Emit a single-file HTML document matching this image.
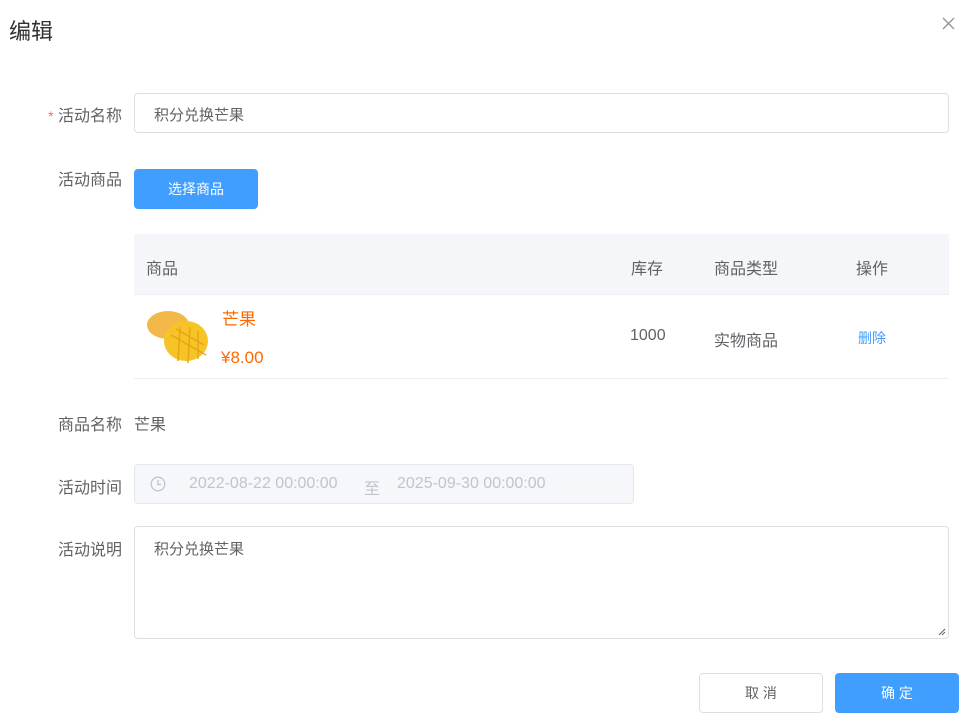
<!DOCTYPE html>
<html><head><meta charset="utf-8"><style>
*{box-sizing:border-box;margin:0;padding:0}
body{width:964px;height:726px;background:#fff;font-family:"Liberation Sans","Noto Sans CJK SC",sans-serif;color:#606266;position:relative;overflow:hidden}
.a{position:absolute}
.lbl{position:absolute;right:842px;font-size:16px;color:#606266;white-space:nowrap}
.inp{position:absolute;border:1px solid #dcdfe6;border-radius:4px;background:#fff}
</style></head><body>
<div class="a" style="left:9px;top:14px;font-size:22px;color:#303133">编辑</div>
<svg class="a" style="left:942px;top:17px" width="13" height="13" viewBox="0 0 13 13"><path d="M1 1L12 12M12 1L1 12" stroke="#909399" stroke-width="1.3"/></svg>

<div class="lbl" style="top:102px"><span style="color:#f56c6c;font-size:14px">*</span> 活动名称</div>
<div class="inp" style="left:134px;top:93px;width:815px;height:40px"><span class="a" style="left:19px;top:10px;font-size:15px;color:#606266">积分兑换芒果</span></div>

<div class="lbl" style="top:166px">活动商品</div>
<div class="a" style="left:134px;top:169px;width:124px;height:40px;background:#409eff;border-radius:4px;color:#fff;font-size:14px;text-align:center;line-height:40px">选择商品</div>

<div class="a" style="left:134px;top:234px;width:815px;height:61px;background:#f5f6fa;border-bottom:1px solid #ebeef5"></div>
<div class="a" style="left:146px;top:255px;font-size:16px">商品</div>
<div class="a" style="left:631px;top:255px;font-size:16px">库存</div>
<div class="a" style="left:714px;top:255px;font-size:16px">商品类型</div>
<div class="a" style="left:856px;top:255px;font-size:16px">操作</div>
<div class="a" style="left:134px;top:378px;width:815px;height:1px;background:#ebeef5"></div>
<svg class="a" style="left:146px;top:305px" width="66" height="62" viewBox="0 0 66 62">
<ellipse cx="22" cy="20" rx="21" ry="14" fill="#f2b94a"/>
<ellipse cx="40" cy="36" rx="22" ry="20" fill="#f7c428"/>
<path d="M25 30L60 50M30 24L58 40M34 22L32 56M44 22L42 58M52 26L52 54" stroke="#e8a514" stroke-width="1.5"/>
</svg>
<div class="a" style="left:222px;top:305px;font-size:17px;color:#ff6a00">芒果</div>
<div class="a" style="left:221px;top:348px;font-size:17px;color:#ff6a00">¥8.00</div>
<div class="a" style="left:630px;top:327px;font-size:16px">1000</div>
<div class="a" style="left:714px;top:327px;font-size:16px">实物商品</div>
<div class="a" style="left:858px;top:328px;font-size:14px;color:#409eff">删除</div>

<div class="lbl" style="top:411px">商品名称</div>
<div class="a" style="left:134px;top:411px;font-size:16px">芒果</div>

<div class="lbl" style="top:474px">活动时间</div>
<div class="inp" style="left:134px;top:464px;width:500px;height:40px;background:#f5f7fa;border-color:#e4e7ed">
<svg class="a" style="left:15px;top:11px" width="16" height="16" viewBox="0 0 16 16"><circle cx="8" cy="8" r="6.8" fill="none" stroke="#c0c4cc" stroke-width="1.3"/><path d="M8 4V8.5H11" fill="none" stroke="#c0c4cc" stroke-width="1.3"/></svg>
<span class="a" style="left:54px;top:10px;font-size:16px;color:#c0c4cc">2022-08-22 00:00:00</span>
<span class="a" style="left:229px;top:10px;font-size:16px;color:#c0c4cc">至</span>
<span class="a" style="left:262px;top:10px;font-size:16px;color:#c0c4cc">2025-09-30 00:00:00</span>
</div>

<div class="lbl" style="top:536px">活动说明</div>
<div class="inp" style="left:134px;top:526px;width:815px;height:113px"><span class="a" style="left:19px;top:11px;font-size:15px">积分兑换芒果</span>
<svg class="a" style="right:2px;bottom:2px" width="9" height="9"><path d="M8 2L2 8M8 5L5 8" stroke="#606266"/></svg></div>

<div class="a" style="left:699px;top:673px;width:124px;height:40px;border:1px solid #dcdfe6;border-radius:4px;text-align:center;line-height:38px;font-size:14px;color:#606266">取 消</div>
<div class="a" style="left:835px;top:673px;width:124px;height:40px;background:#409eff;border-radius:4px;text-align:center;line-height:40px;font-size:14px;color:#fff">确 定</div>
</body></html>
